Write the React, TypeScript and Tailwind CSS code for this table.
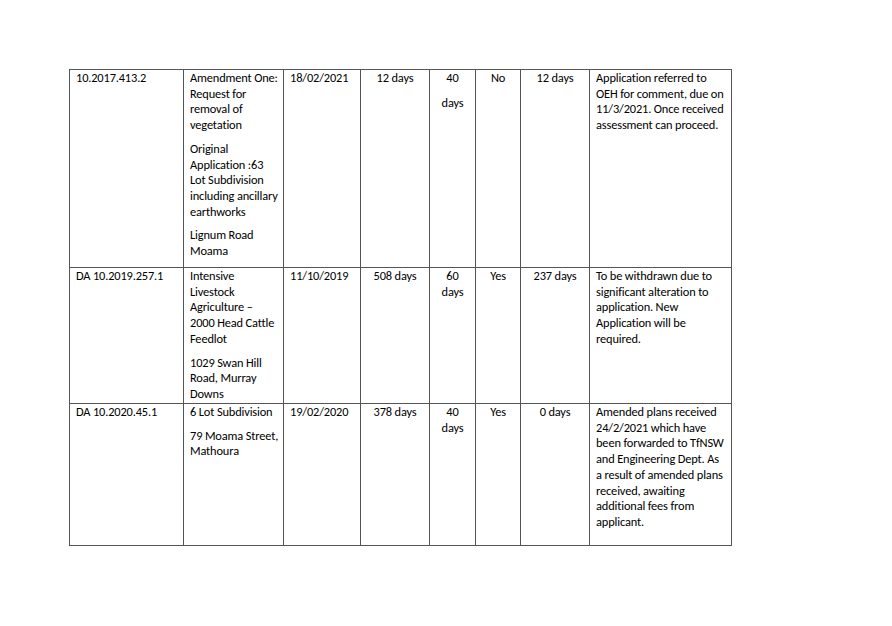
const rows = [
  {
    id: "10.2017.413.2",
    desc: [
      ["Amendment One:", "Request for", "removal of", "vegetation"],
      ["Original", "Application :63", "Lot Subdivision", "including ancillary", "earthworks"],
      ["Lignum Road", "Moama"],
    ],
    lodged: "18/02/2021",
    elapsed: "12 days",
    target: ["40", "days"],
    spaced: true,
    stop: "No",
    net: "12 days",
    comment: ["Application referred to", "OEH for comment, due on", "11/3/2021. Once received", "assessment can proceed."],
    h: "h-[198px]",
  },
  {
    id: "DA 10.2019.257.1",
    desc: [
      ["Intensive", "Livestock", "Agriculture –", "2000 Head Cattle", "Feedlot"],
      ["1029 Swan Hill", "Road, Murray", "Downs"],
    ],
    lodged: "11/10/2019",
    elapsed: "508 days",
    target: ["60", "days"],
    spaced: false,
    stop: "Yes",
    net: "237 days",
    comment: ["To be withdrawn due to", "significant alteration to", "application. New", "Application will be", "required."],
    h: "h-[136px]",
  },
  {
    id: "DA 10.2020.45.1",
    desc: [["6 Lot Subdivision"], ["79 Moama Street,", "Mathoura"]],
    lodged: "19/02/2020",
    elapsed: "378 days",
    target: ["40", "days"],
    spaced: false,
    stop: "Yes",
    net: "0 days",
    comment: [
      "Amended plans received",
      "24/2/2021 which have",
      "been forwarded to TfNSW",
      "and Engineering Dept. As",
      "a result of amended plans",
      "received, awaiting",
      "additional fees from",
      "applicant.",
    ],
    h: "h-[142px]",
  },
];

const cell = "border border-[#555555] align-top px-[6px] pt-0 whitespace-nowrap";

function Lines({ lines }: { lines: string[] }) {
  return (
    <>
      {lines.map((l, i) => (
        <span key={i} className="block">
          {l}
        </span>
      ))}
    </>
  );
}

export default function App() {
  return (
    <div className="h-[626px] w-[892px] bg-white pl-[69px] pt-[69px] font-['Carlito','Lato',sans-serif] text-[12.4px] leading-[15.7px] tracking-[-0.15px] text-black">
      <table className="w-[662px] table-fixed border-collapse">
        <colgroup>
          <col className="w-[114px]" />
          <col className="w-[100px]" />
          <col className="w-[77px]" />
          <col className="w-[69px]" />
          <col className="w-[46px]" />
          <col className="w-[45px]" />
          <col className="w-[69px]" />
          <col className="w-[142px]" />
        </colgroup>
        <tbody>
          {rows.map((r) => (
            <tr key={r.id} className={r.h}>
              <td className={cell}>{r.id}</td>
              <td className={cell}>
                {r.desc.map((d, i) => (
                  <p key={i} className={i < r.desc.length - 1 ? "mb-[8px]" : ""}>
                    <Lines lines={d} />
                  </p>
                ))}
              </td>
              <td className={cell}>{r.lodged}</td>
              <td className={`${cell} text-center`}>{r.elapsed}</td>
              <td className={`${cell} text-center`}>
                <p className={r.spaced ? "mb-[9px]" : ""}>{r.target[0]}</p>
                <p>{r.target[1]}</p>
              </td>
              <td className={`${cell} text-center`}>{r.stop}</td>
              <td className={`${cell} text-center`}>{r.net}</td>
              <td className={cell}>
                <Lines lines={r.comment} />
              </td>
            </tr>
          ))}
        </tbody>
      </table>
    </div>
  );
}
